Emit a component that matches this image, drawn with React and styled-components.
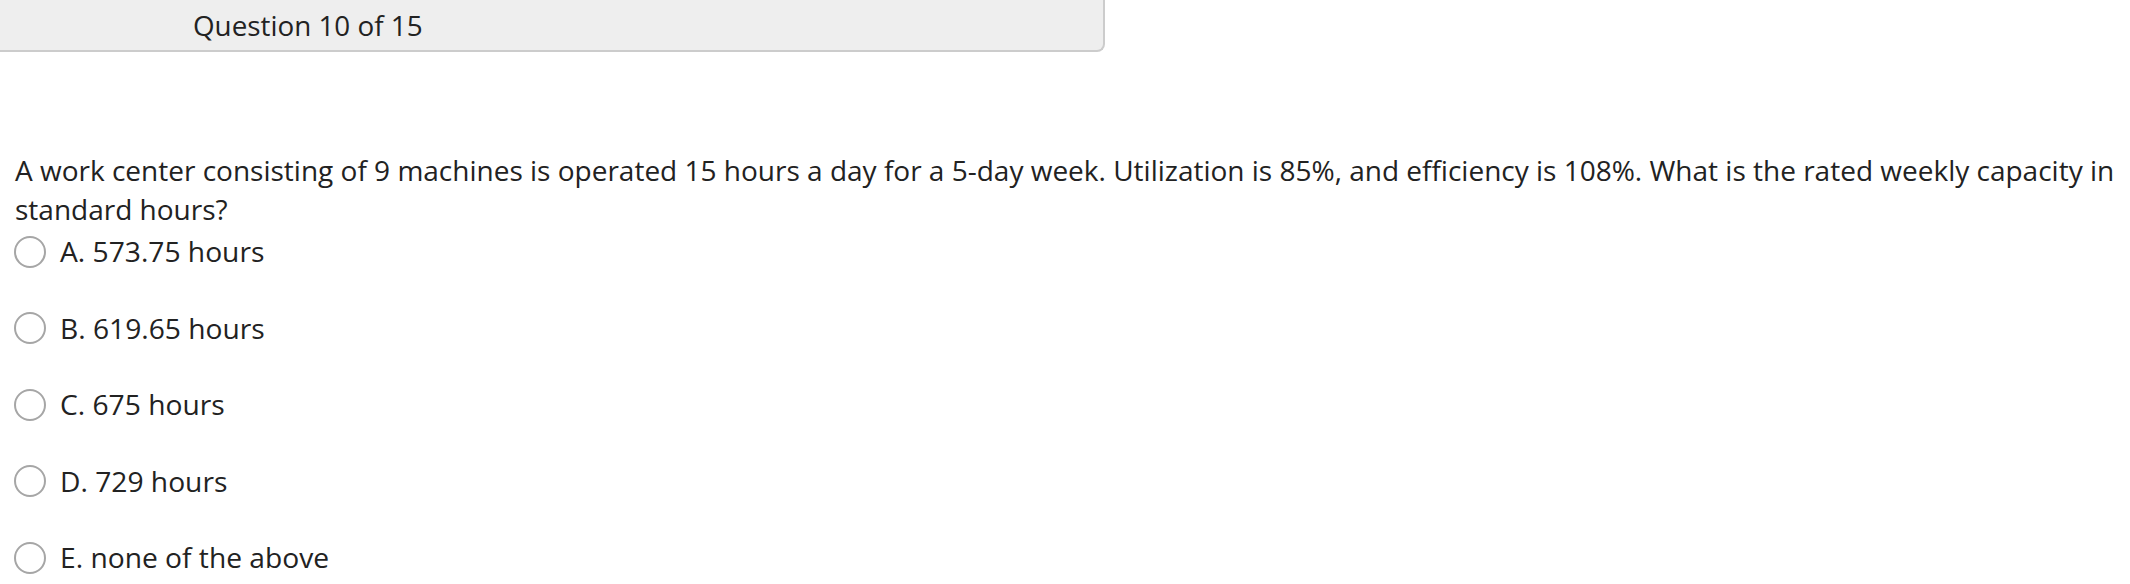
import React from "react";
import styled, { createGlobalStyle } from "styled-components";

const Global = createGlobalStyle`
  html, body { margin: 0; padding: 0; background: #fff; }
  body { font-family: "Open Sans", "Liberation Sans", sans-serif; color: #222; }
`;

const Page = styled.div`
  display: flex;
  flex-direction: column;
`;

const HeaderBar = styled.div`
  box-sizing: border-box;
  width: 1105px;
  height: 52px;
  background: #eeeeee;
  border-right: 2px solid #cccccc;
  border-bottom: 2px solid #cccccc;
  border-bottom-right-radius: 8px;
  display: flex;
  align-items: center;
  padding-left: 193px;
`;

const HeaderTitle = styled.span`
  font-size: 27.8px;
  line-height: 39px;
  color: #222;
  padding-top: 1px;
`;

const Body = styled.div`
  padding: 99px 14px 0 15px;
`;

const QuestionText = styled.p`
  margin: 0;
  font-size: 28px;
  line-height: 39px;
  color: #222;
`;

const OptionList = styled.div`
  display: flex;
  flex-direction: column;
  gap: 37.5px;
  margin-top: 3px;
`;

const Option = styled.label`
  display: flex;
  align-items: center;
  height: 39px;
  gap: 14px;
  margin-left: -1px;
  cursor: pointer;
`;

const Radio = styled.span`
  box-sizing: border-box;
  width: 32px;
  height: 32px;
  border-radius: 50%;
  border: 2px solid #a6a6a6;
  background: #fff;
  flex: none;
`;

const OptionText = styled.span`
  font-size: 28.2px;
  line-height: 39px;
  color: #222;
`;

const options = [
  "A. 573.75 hours",
  "B. 619.65 hours",
  "C. 675 hours",
  "D. 729 hours",
  "E. none of the above",
];

export default function App() {
  return (
    <Page>
      <Global />
      <HeaderBar>
        <HeaderTitle>Question 10 of 15</HeaderTitle>
      </HeaderBar>
      <Body>
        <QuestionText>
          A work center consisting of 9 machines is operated 15 hours a day for a 5-day week. Utilization is 85%, and efficiency is 108%. What is the rated weekly capacity in standard hours?
        </QuestionText>
        <OptionList>
          {options.map((o) => (
            <Option key={o}>
              <Radio />
              <OptionText>{o}</OptionText>
            </Option>
          ))}
        </OptionList>
      </Body>
    </Page>
  );
}
